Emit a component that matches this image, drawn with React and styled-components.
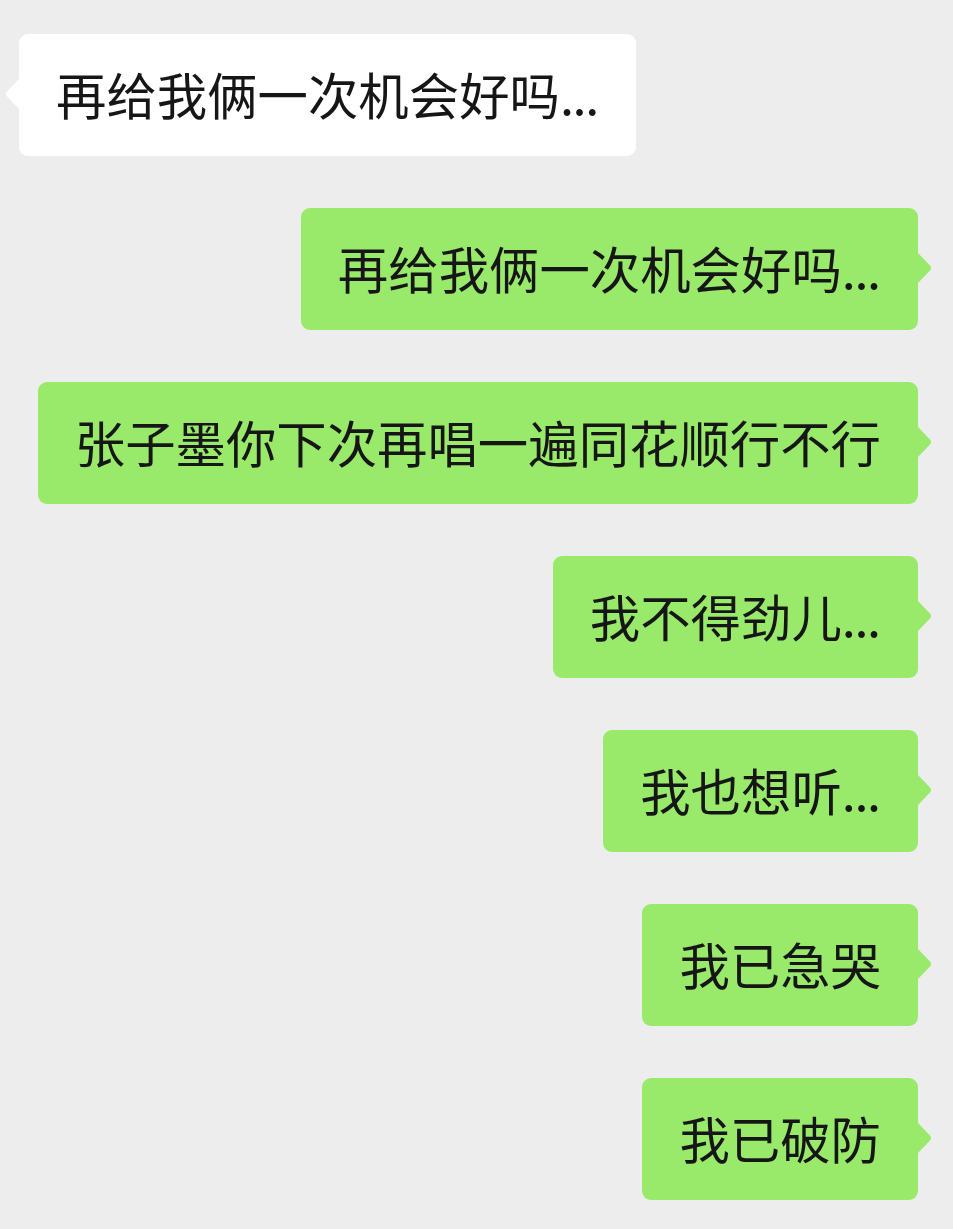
import React from "react";
import styled, { createGlobalStyle } from "styled-components";

const GlobalStyle = createGlobalStyle`
  html, body {
    margin: 0;
    padding: 0;
    background: #ededed;
  }
  body {
    font-family: "Noto Sans CJK SC", "Noto Sans", sans-serif;
  }
`

const ChatList = styled.div`
  display: flex;
  flex-direction: column;
  gap: 52px;
  padding: 34px 35px 30px 19px;
  min-height: 1229px;
  box-sizing: border-box;
`

const Row = styled.div`
  display: flex;
  justify-content: ${props => (props.mine ? "flex-end" : "flex-start")};
`

const Bubble = styled.div`
  position: relative;
  display: flex;
  align-items: center;
  box-sizing: border-box;
  height: 122px;
  padding: 0 37px 2px 37px;
  border-radius: 9px;
  background: ${props => (props.mine ? "#99e96b" : "#ffffff")};
  color: #161616;
  font-size: 50.4px;
  line-height: 1;
  white-space: nowrap;
`

const Dots = styled.span`
  letter-spacing: -1.4px;
  margin-right: 1.4px;
`

const Tail = styled.svg`
  position: absolute;
  top: 44px;
  width: 16px;
  height: 32px;
  ${props => (props.mine ? "right: -15px;" : "left: -15px; transform: scaleX(-1);")}
`

const messages = [
  { mine: false, text: "再给我俩一次机会好吗..." },
  { mine: true, text: "再给我俩一次机会好吗..." },
  { mine: true, text: "张子墨你下次再唱一遍同花顺行不行" },
  { mine: true, text: "我不得劲儿..." },
  { mine: true, text: "我也想听..." },
  { mine: true, text: "我已急哭" },
  { mine: true, text: "我已破防" },
]

function renderText(text) {
  if (!text.endsWith("...")) return text
  return (
    <>
      {text.slice(0, -3)}
      <Dots>...</Dots>
    </>
  )
}

export default function App() {
  return (
    <>
      <GlobalStyle />
      <ChatList>
        {messages.map((m, i) => (
          <Row key={i} mine={m.mine}>
            <Bubble mine={m.mine}>
              {renderText(m.text)}
              <Tail mine={m.mine} viewBox="0 0 16 32">
                <path
                  d="M0 0 L13 13.5 Q15 16 13 18.5 L0 32 Z"
                  fill={m.mine ? "#99e96b" : "#ffffff"}
                />
              </Tail>
            </Bubble>
          </Row>
        ))}
      </ChatList>
    </>
  )
}
